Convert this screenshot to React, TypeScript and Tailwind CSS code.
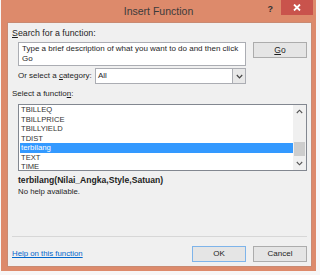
import React from "react";

const items = ["TBILLEQ", "TBILLPRICE", "TBILLYIELD", "TDIST", "terbilang", "TEXT", "TIME"];

export default function App() {
  return (
    <div className="w-[320px] h-[275px] bg-[#f7f7f7] overflow-hidden" style={{ fontFamily: '"Liberation Sans", Arial, sans-serif' }}>
      <div className="ml-[1px] w-[315px] h-[271px] bg-[#dd8a6b] flex flex-col">
        {/* title bar */}
        <div className="h-[22px] flex items-start relative">
          <div className="flex-1 text-center text-[10.5px] leading-[22px] text-[#3b3b3b]">Insert Function</div>
          <div className="absolute right-[43px] top-[3px] text-[9px] font-bold text-[#333]">?</div>
          <div className="absolute right-[3px] top-0 w-[32px] h-[15px] bg-[#c9534c] flex items-center justify-center">
            <svg width="8" height="7" viewBox="0 0 8 7">
              <path d="M1 0.5 L7 6.5 M7 0.5 L1 6.5" stroke="#fff" strokeWidth="1.8" />
            </svg>
          </div>
        </div>
        {/* content */}
        <div className="ml-[6px] w-[305px] h-[245px] bg-[#f0f0f0] border border-[#c98a72] text-[8px] text-[#1e1e1e] flex flex-col">
          <div className="ml-[4px] mt-[4px] leading-[12px] text-[8.8px]">
            <span className="underline">S</span>earch for a function:
          </div>
          <div className="flex mt-[3px] ml-[10px]">
            <div className="w-[228px] h-[24px] bg-white border border-[#abadb3] pl-[3px] pr-[2px] pt-[1px] leading-[10px] text-[8px]">
              Type a brief description of what you want to do and then click Go
            </div>
            <div className="ml-[7px] w-[54px] h-[16px] bg-[#e5e5e5] border border-[#acacac] flex items-center justify-center text-[8.5px]">
              <span className="underline">G</span>o
            </div>
          </div>
          <div className="flex items-center mt-[2px] ml-[10px] h-[16px]">
            <div className="w-[77px] whitespace-nowrap">Or select a <span className="underline">c</span>ategory:</div>
            <div className="w-[151px] h-[16px] bg-white border border-[#abadb3] flex items-center">
              <div className="flex-1 pl-[2px]">All</div>
              <div className="w-[13px] h-full border-l border-[#abadb3] bg-[#e8e8e8] flex items-center justify-center">
                <svg width="7" height="5" viewBox="0 0 7 5">
                  <path d="M0.8 1 L3.5 3.8 L6.2 1" stroke="#444" strokeWidth="1.2" fill="none" />
                </svg>
              </div>
            </div>
          </div>
          <div className="ml-[4px] mt-[4px] leading-[12px]">
            Select a functio<span className="underline">n</span>:
          </div>
          <div className="ml-[10px] mt-[4px] w-[289px] h-[67px] bg-white border border-[#828790] flex">
            <div className="flex-1 pl-[1px] flex flex-col">
              {items.map((it) => (
                <div
                  key={it}
                  className={
                    it === "terbilang"
                      ? "h-[9.5px] leading-[9.5px] text-[7.8px] bg-[#3399ff] text-white pl-[1px]"
                      : "h-[9.5px] leading-[9.5px] text-[7.6px] text-[#333] pl-[1px]"
                  }
                >
                  {it}
                </div>
              ))}
            </div>
            <div className="w-[13px] bg-[#f0f0f0] flex flex-col items-center">
              <div className="h-[13px] flex items-center justify-center">
                <svg width="7" height="5" viewBox="0 0 7 5">
                  <path d="M0.8 4 L3.5 1.2 L6.2 4" stroke="#555" strokeWidth="1.1" fill="none" />
                </svg>
              </div>
              <div className="flex-1 w-full flex flex-col">
                <div className="h-[24px]" />
                <div className="mx-[1px] h-[14px] bg-[#cdcdcd]" />
              </div>
              <div className="h-[13px] flex items-center justify-center">
                <svg width="7" height="5" viewBox="0 0 7 5">
                  <path d="M0.8 1 L3.5 3.8 L6.2 1" stroke="#555" strokeWidth="1.1" fill="none" />
                </svg>
              </div>
            </div>
          </div>
          <div className="ml-[10px] mt-[3px] font-bold leading-[12px] text-[8.6px]">terbilang(Nilai_Angka,Style,Satuan)</div>
          <div className="ml-[10px] leading-[12px] text-[7.8px]">No help available.</div>
          <div className="mx-[4px] mt-[38px] h-px bg-[#d7d7d7]" />
          <div className="flex items-center mt-[9px]">
            <div className="ml-[4px] flex-1 text-[#0066cc] underline text-[7.8px]">Help on this function</div>
            <div className="w-[54px] h-[16px] bg-[#e5e5e5] border border-[#7eb4ea] flex items-center justify-center">OK</div>
            <div className="ml-[7px] mr-[4px] w-[54px] h-[16px] bg-[#e5e5e5] border border-[#acacac] flex items-center justify-center">Cancel</div>
          </div>
        </div>
      </div>
    </div>
  );
}
